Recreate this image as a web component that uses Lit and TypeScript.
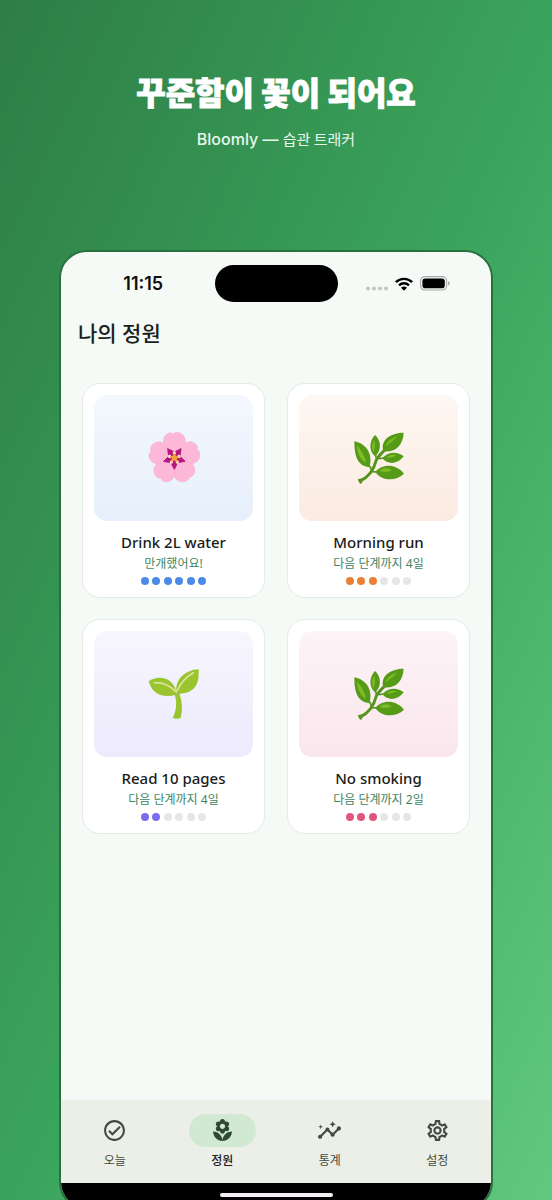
import { LitElement, html, svg, css, nothing } from "lit";
import { customElement, property, state } from "lit/decorators.js";
import { classMap } from "lit/directives/class-map.js";

type Plant = "blossom" | "herb" | "sprout";
type Tone = "blue" | "orange" | "violet" | "rose";

interface Habit {
  name: string;
  status: string;
  plant: Plant;
  tone: Tone;
  stage: number;
}

const STAGES = [1, 2, 3, 4, 5, 6];

const HABITS: Habit[] = [
  { name: "Drink 2L water", status: "만개했어요!", plant: "blossom", tone: "blue", stage: 6 },
  { name: "Morning run", status: "다음 단계까지 4일", plant: "herb", tone: "orange", stage: 3 },
  { name: "Read 10 pages", status: "다음 단계까지 4일", plant: "sprout", tone: "violet", stage: 2 },
  { name: "No smoking", status: "다음 단계까지 2일", plant: "herb", tone: "rose", stage: 3 },
];

const TABS = [
  {
    label: "오늘",
    path: "M16.59 7.58L10 14.17l-2.59-2.58L6 13l4 4 8-8zM12 2C6.48 2 2 6.48 2 12s4.48 10 10 10 10-4.48 10-10S17.52 2 12 2zm0 18c-4.42 0-8-3.58-8-8s3.58-8 8-8 8 3.58 8 8-3.58 8-8 8z",
  },
  {
    label: "정원",
    path: "M12 22c4.97 0 9-4.03 9-9-4.97 0-9 4.03-9 9zM5.6 10.25c0 1.38 1.12 2.5 2.5 2.5.53 0 1.01-.16 1.42-.44l-.02.19c0 1.38 1.12 2.5 2.5 2.5s2.5-1.12 2.5-2.5l-.02-.19c.4.28.89.44 1.42.44 1.38 0 2.5-1.12 2.5-2.5 0-1-.59-1.85-1.43-2.25.84-.4 1.43-1.25 1.43-2.25 0-1.38-1.12-2.5-2.5-2.5-.53 0-1.01.16-1.42.44l.02-.19C14.5 2.12 13.38 1 12 1S9.5 2.12 9.5 3.5l.02.19c-.4-.28-.89-.44-1.42-.44-1.38 0-2.5 1.12-2.5 2.5 0 1 .59 1.85 1.43 2.25-.84.4-1.43 1.25-1.43 2.25zM12 5.5c1.38 0 2.5 1.12 2.5 2.5s-1.12 2.5-2.5 2.5S9.5 9.38 9.5 8s1.12-2.5 2.5-2.5zM3 13c0 4.97 4.03 9 9 9 0-4.97-4.03-9-9-9z",
  },
  {
    label: "통계",
    path: "M21 8c-1.45 0-2.26 1.44-1.93 2.51l-3.55 3.56c-.3-.09-.74-.09-1.04 0l-2.55-2.55C12.27 10.45 11.46 9 10 9c-1.45 0-2.27 1.44-1.93 2.52l-4.56 4.55C2.44 15.74 1 16.55 1 18c0 1.1.9 2 2 2 1.45 0 2.26-1.44 1.93-2.51l4.55-4.56c.3.09.74.09 1.04 0l2.55 2.55C12.73 16.55 13.54 18 15 18c1.45 0 2.27-1.44 1.93-2.52l3.56-3.55C21.56 12.26 23 11.45 23 10c0-1.1-.9-2-2-2zM15 9l.94-2.07L18 6l-2.06-.93L15 3l-.92 2.07L12 6l2.08.93zM3.5 11l.5-2 2-.5-2-.5-.5-2-.5 2-2 .5 2 .5z",
  },
  {
    label: "설정",
    path: "M19.43 12.98c.04-.32.07-.64.07-.98s-.03-.66-.07-.98l2.11-1.65c.19-.15.24-.42.12-.64l-2-3.46c-.09-.16-.26-.25-.44-.25-.06 0-.12.01-.17.03l-2.49 1c-.52-.4-1.08-.73-1.69-.98l-.38-2.65C14.46 2.18 14.25 2 14 2h-4c-.25 0-.46.18-.49.42l-.38 2.65c-.61.25-1.17.59-1.69.98l-2.49-1c-.06-.02-.12-.03-.18-.03-.17 0-.34.09-.43.25l-2 3.46c-.13.22-.07.49.12.64l2.11 1.65c-.04.32-.07.65-.07.98s.03.66.07.98l-2.11 1.65c-.19.15-.24.42-.12.64l2 3.46c.09.16.26.25.44.25.06 0 .12-.01.17-.03l2.49-1c.52.4 1.08.73 1.69.98l.38 2.65c.03.24.24.42.49.42h4c.25 0 .46-.18.49-.42l.38-2.65c.61-.25 1.17-.59 1.69-.98l2.49 1c.06.02.12.03.18.03.17 0 .34-.09.43-.25l2-3.46c.12-.22.07-.49-.12-.64l-2.11-1.65zm-1.98-1.71c.04.31.05.52.05.73 0 .21-.02.43-.05.73l-.14 1.13.89.7 1.08.84-.7 1.21-1.27-.51-1.04-.42-.9.68c-.43.32-.84.56-1.25.73l-1.06.43-.16 1.13-.2 1.35h-1.4l-.19-1.35-.16-1.13-1.06-.43c-.43-.18-.83-.41-1.23-.71l-.91-.7-1.06.43-1.27.51-.7-1.21 1.08-.84.89-.7-.14-1.13c-.03-.31-.05-.54-.05-.74s.02-.43.05-.73l.14-1.13-.89-.7-1.08-.84.7-1.21 1.27.51 1.04.42.9-.68c.43-.32.84-.56 1.25-.73l1.06-.43.16-1.13.2-1.35h1.39l.19 1.35.16 1.13 1.06.43c.43.18.83.41 1.23.71l.91.7 1.06-.43 1.27-.51.7 1.21-1.07.85-.89.7.14 1.13zM12 8c-2.21 0-4 1.79-4 4s1.79 4 4 4 4-1.79 4-4-1.79-4-4-4zm0 6c-1.1 0-2-.9-2-2s.9-2 2-2 2 .9 2 2-.9 2-2 2z",
  },
];

const TURNS = [0, 72, 144, 216, 288];

const blossom = html`
  <svg class="plant" viewBox="-79 -78 156 156" aria-hidden="true">
    ${TURNS.map(
      (turn) => svg`<g transform="rotate(${turn})">
        <path fill="#fdb8d8" stroke="#f6a5ca" stroke-width="1"
          d="M0 -6C-16 -18 -35 -34 -33 -54C-31 -68 -20 -77 -9 -76L-4 -72L3 -77C18 -79 31 -69 33 -54C35 -34 16 -18 0 -6z" />
      </g>`
    )}
    <path fill="#b5177f" stroke="#b5177f" stroke-width="3" stroke-linejoin="round"
      d="M0 34L-10 14L-32 10L-17 -5L-20 -28L0 -18L20 -28L17 -5L32 10L10 14z" />
    ${TURNS.map((turn) => svg`<circle cy="-15" r="5" fill="#fde3c8" transform="rotate(${turn})" />`)}
    <path fill="#f4a03c" stroke="#f4a03c" stroke-width="3" stroke-linejoin="round"
      d="M0 -13L4 -5L12 -4L6 2L8 10L0 6L-8 10L-6 2L-12 -4L-4 -5z" />
  </svg>
`;

const herb = html`
  <svg class="plant" viewBox="217 168 156 156" aria-hidden="true">
    <path fill="none" stroke="#54941b" stroke-width="9" stroke-linecap="round" stroke-linejoin="round"
      d="M239 315C262 304 279 283 287 252C292 241 302 232 314 220" />
    <path fill="#54941b" d="M231 310L246 307L244 322Q238 325 235 318z" />
    <path fill="none" stroke="#54941b" stroke-width="5"
      d="M266 268L274 284M284 236L289 252M294 248L310 246M272 287L292 288" />
    <g fill="#559b17">
      <path d="M221 196C221 237 228 269 266 274C278 234 257 203 221 196z" />
      <path d="M283 177C267 192 262 226 284 241C302 225 303 194 283 177z" />
      <path d="M369 170C333 170 297 190 308 226C345 230 367 208 369 170z" />
      <path d="M369 241C350 224 320 227 305 247C322 268 352 264 369 241z" />
      <path d="M370 293C345 262 304 263 284 288C303 317 346 316 370 293z" />
    </g>
    <g fill="#7dbb27">
      <path d="M228 208C230 231 238 250 256 261C255 246 243 224 228 208z" />
      <path d="M281 191C273 203 273 219 279 228C283 217 284 203 281 191z" />
      <path d="M350 181C333 186 317 198 315 212C327 202 340 193 350 181z" />
      <path d="M348 238C335 234 323 238 317 245C329 246 339 243 348 238z" />
      <path d="M333 283C319 272 303 277 296 285C309 289 323 289 333 283z" />
    </g>
  </svg>
`;

const sprout = html`
  <svg class="plant" viewBox="217 169 156 156" aria-hidden="true">
    <path fill="#9ac52f" d="M297 246L310 244C322 272 320 298 315 319Q303 323 291 319C303 296 304 272 297 246z" />
    <path fill="#9ac52f" d="M219 209C243 192 288 192 301 237L303 249C268 258 232 254 219 209z" />
    <path fill="#9ac52f" d="M369 173C371 215 361 246 304 247C292 208 328 174 369 173z" />
    <path fill="none" stroke="#dbe39c" stroke-width="5" stroke-linecap="round"
      d="M236 213C262 212 283 222 299 239M304 238C314 216 330 196 353 183" />
  </svg>
`;

const PLANTS = { blossom, herb, sprout };

@customElement("habit-card")
export class HabitCard extends LitElement {
  @property({ attribute: false }) habit!: Habit;

  static styles = css`
    :host {
      display: block;
      min-width: 0;
    }
    .card {
      display: flex;
      flex-direction: column;
      align-items: center;
      box-sizing: border-box;
      padding: 11px 11px 12px;
      border: 1px solid #e3ebe4;
      border-radius: 18px;
      background: #ffffff;
    }
    .scene {
      display: grid;
      place-items: center;
      align-self: stretch;
      height: 126px;
      border-radius: 13px;
    }
    .plant {
      display: block;
      width: 52px;
      height: 52px;
    }
    .name {
      margin: 11px 0 0;
      color: #1a1c1a;
      font-size: 15px;
      font-weight: 500;
      line-height: 20px;
    }
    .status {
      margin: 4px 0 0;
      color: #3f8562;
      font-size: 12px;
      line-height: 16px;
    }
    .stages {
      display: flex;
      justify-content: space-between;
      width: 66px;
      margin-top: 5px;
    }
    .dot {
      width: 8px;
      height: 8px;
      border-radius: 50%;
      background: #e4e7e5;
    }
    .scene.blue { background: linear-gradient(#f4f8fe, #e6effb); }
    .scene.orange { background: linear-gradient(#fef7f2, #fbebe2); }
    .scene.violet { background: linear-gradient(#f7f6fe, #eceafc); }
    .scene.rose { background: linear-gradient(#fdf4f7, #fae6ec); }
    .dot.blue { background: #4b8ae8; }
    .dot.orange { background: #ea7f38; }
    .dot.violet { background: #7b6cf0; }
    .dot.rose { background: #e0567d; }
  `;

  render() {
    const { name, status, plant, tone, stage } = this.habit;
    return html`
      <article class="card">
        <div class=${classMap({ scene: true, [tone]: true })}>${PLANTS[plant]}</div>
        <h3 class="name">${name}</h3>
        <p class="status">${status}</p>
        <div class="stages" role="img" aria-label="${stage} / ${STAGES.length}">
          ${STAGES.map((n) => html`<span class=${classMap({ dot: true, [tone]: n <= stage })}></span>`)}
        </div>
      </article>
    `;
  }
}

@customElement("status-bar")
export class StatusBar extends LitElement {
  static styles = css`
    :host {
      display: block;
    }
    .bar {
      display: grid;
      grid-template-columns: 1fr 123px 1fr;
      align-items: center;
      height: 37px;
      padding-top: 13px;
    }
    .time {
      padding-left: 11px;
      color: #0c0f0d;
      font-family: Inter, "Liberation Sans", sans-serif;
      font-size: 18px;
      font-weight: 600;
      line-height: 20px;
      text-align: center;
    }
    .island {
      height: 37px;
      border-radius: 19px;
      background: #000000;
    }
    .signals {
      display: flex;
      align-items: center;
      justify-content: flex-end;
      gap: 7px;
      padding-right: 41px;
    }
  `;

  render() {
    return html`
      <div class="bar">
        <time class="time">11:15</time>
        <div class="island"></div>
        <div class="signals">
          <svg width="22" height="16" viewBox="0 0 22 16" aria-hidden="true">
            <g fill="#c3c7c4">
              <circle cx="2" cy="12.5" r="2" /><circle cx="8" cy="12.5" r="2" />
              <circle cx="14" cy="12.5" r="2" /><circle cx="20" cy="12.5" r="2" />
            </g>
          </svg>
          <svg width="18" height="14" viewBox="0 0 18 14" aria-hidden="true">
            <path fill="none" stroke="#000" stroke-width="2.4" d="M.9 5.2C5.4 .7 12.6 .7 17.1 5.2M4 8.4C6.8 5.6 11.2 5.6 14 8.4" />
            <path d="M9 13.8L6 10.8C7.7 9.2 10.3 9.2 12 10.8z" />
          </svg>
          <svg width="30" height="15" viewBox="0 0 30 15" aria-hidden="true">
            <rect x=".6" y=".6" width="26" height="13.4" rx="4.3" fill="none" stroke="#a7aaa8" stroke-width="1.1" />
            <rect x="2.4" y="2.4" width="22.4" height="9.8" rx="2.8" />
            <path fill="#a7aaa8" d="M28 5.2C30.3 5.8 30.3 8.8 28 9.4z" />
          </svg>
        </div>
      </div>
    `;
  }
}

@customElement("app-root")
export class AppRoot extends LitElement {
  @state() private tab = 1;

  static styles = css`
    :host {
      display: block;
      font-family: "Noto Sans", "Noto Sans CJK KR", sans-serif;
    }
    .page {
      display: flex;
      flex-direction: column;
      box-sizing: border-box;
      min-height: 100vh;
      padding: 67px 59px 0;
      overflow: hidden;
      background: linear-gradient(to bottom right, #2e7d46, #3aa35b 50%, #60c97f);
    }
    .hero {
      text-align: center;
      color: #ffffff;
    }
    .headline {
      margin: 0;
      font-family: "Noto Sans CJK KR", sans-serif;
      font-size: 32px;
      font-weight: 900;
      line-height: 48px;
      -webkit-text-stroke: 1px currentColor;
    }
    .tagline {
      margin: 12px 0 0;
      color: #e9f7ed;
      font-family: "Noto Sans CJK KR", sans-serif;
      font-size: 15px;
      line-height: 24px;
    }
    .brand {
      font-family: Inter, sans-serif;
      font-size: 16px;
      font-weight: 500;
    }
    .phone {
      display: flex;
      flex: 1;
      flex-direction: column;
      margin: 99px 0 -10px;
      border: 2px solid #27713e;
      border-radius: 28px;
      overflow: hidden;
      background: #f5faf6;
    }
    .title {
      margin: 0;
      padding: 16px 17px 0;
      color: #1a1f1b;
      font-size: 21px;
      font-weight: 500;
      line-height: 30px;
    }
    .garden {
      display: grid;
      flex: 1;
      grid-template-columns: 1fr 1fr;
      align-content: start;
      gap: 21px 22px;
      padding: 35px 21px;
    }
    .tabs {
      display: grid;
      grid-template-columns: repeat(4, 1fr);
      height: 83px;
      background: #ecefe8;
    }
    .tab {
      display: flex;
      flex-direction: column;
      align-items: center;
      gap: 4px;
      padding: 14px 0 0;
      border: 0;
      background: none;
      color: #414942;
      font: inherit;
      cursor: pointer;
    }
    .pill {
      display: grid;
      place-items: center;
      width: 67px;
      height: 33px;
      border-radius: 17px;
    }
    .icon {
      display: block;
      width: 25px;
      height: 25px;
      fill: currentColor;
    }
    .label {
      font-size: 12px;
      line-height: 20px;
    }
    .tab.active {
      color: #1c211d;
      font-weight: 500;
    }
    .tab.active .pill {
      background: #d1e8d3;
      color: #2d4a34;
    }
    .home {
      display: flex;
      justify-content: center;
      height: 15px;
      padding-top: 10px;
      background: #000000;
    }
    .handle {
      width: 113px;
      height: 4px;
      border-radius: 2px;
      background: #f3eef3;
    }
  `;

  render() {
    return html`
      <main class="page">
        <header class="hero">
          <h1 class="headline">꾸준함이 꽃이 되어요</h1>
          <p class="tagline"><span class="brand">Bloomly — </span>습관 트래커</p>
        </header>
        <section class="phone">
          <status-bar></status-bar>
          <h2 class="title">나의 정원</h2>
          <div class="garden">
            ${HABITS.map((habit) => html`<habit-card .habit=${habit}></habit-card>`)}
          </div>
          <nav class="tabs">
            ${TABS.map(
              (tab, i) => html`
                <button
                  class=${classMap({ tab: true, active: i === this.tab })}
                  aria-current=${i === this.tab ? "page" : nothing}
                  @click=${() => (this.tab = i)}
                >
                  <span class="pill">
                    <svg class="icon" viewBox="0 0 24 24" aria-hidden="true"><path d=${tab.path} /></svg>
                  </span>
                  <span class="label">${tab.label}</span>
                </button>
              `
            )}
          </nav>
          <div class="home"><div class="handle"></div></div>
        </section>
      </main>
    `;
  }
}
